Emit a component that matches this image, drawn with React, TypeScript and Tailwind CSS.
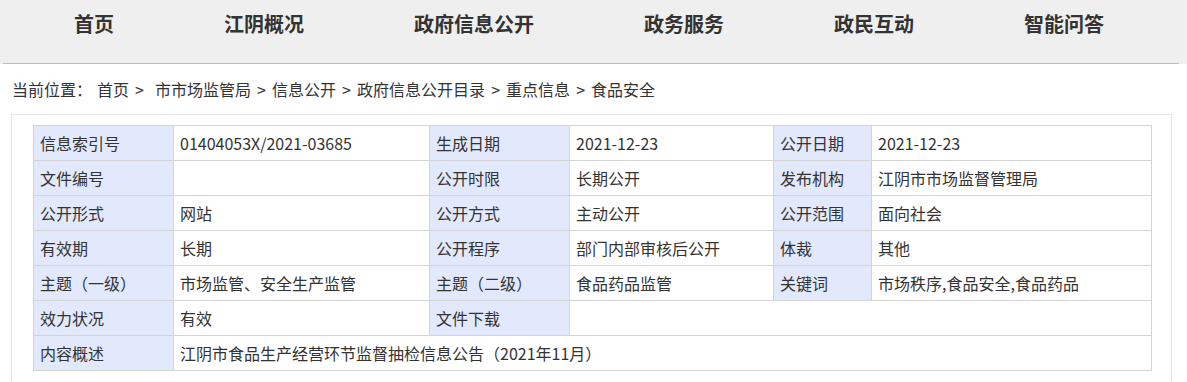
import React from "react";

const font = { fontFamily: '"Microsoft YaHei", "Noto Sans CJK SC", "Noto Sans", sans-serif' };

const navItems = ["首页", "江阴概况", "政府信息公开", "政务服务", "政民互动", "智能问答"];

const crumbs = ["首页", "市市场监管局", "信息公开", "政府信息公开目录", "重点信息", "食品安全"];

type Cell = { text: string; label?: boolean; span?: number };

const rows: Cell[][] = [
  [
    { text: "信息索引号", label: true },
    { text: "01404053X/2021-03685" },
    { text: "生成日期", label: true },
    { text: "2021-12-23" },
    { text: "公开日期", label: true },
    { text: "2021-12-23" },
  ],
  [
    { text: "文件编号", label: true },
    { text: "" },
    { text: "公开时限", label: true },
    { text: "长期公开" },
    { text: "发布机构", label: true },
    { text: "江阴市市场监督管理局" },
  ],
  [
    { text: "公开形式", label: true },
    { text: "网站" },
    { text: "公开方式", label: true },
    { text: "主动公开" },
    { text: "公开范围", label: true },
    { text: "面向社会" },
  ],
  [
    { text: "有效期", label: true },
    { text: "长期" },
    { text: "公开程序", label: true },
    { text: "部门内部审核后公开" },
    { text: "体裁", label: true },
    { text: "其他" },
  ],
  [
    { text: "主题（一级）", label: true },
    { text: "市场监管、安全生产监管" },
    { text: "主题（二级）", label: true },
    { text: "食品药品监管" },
    { text: "关键词", label: true },
    { text: "市场秩序,食品安全,食品药品" },
  ],
  [
    { text: "效力状况", label: true },
    { text: "有效" },
    { text: "文件下载", label: true },
    { text: "", span: 3 },
  ],
  [
    { text: "内容概述", label: true },
    { text: "江阴市食品生产经营环节监督抽检信息公告（2021年11月）", span: 5 },
  ],
];

export default function App() {
  return (
    <div className="w-[1187px] h-[382px] overflow-hidden bg-white text-[#333]" style={font}>
      <div className="bg-[#efefef] h-[64px]">
        <div className="h-[64px] ml-[3px] mr-[8px] border-b border-[#bcbcbc] flex items-start pl-[71px] gap-[110px] pt-[10px]">
          {navItems.map((n) => (
            <div key={n} className="text-[20px] font-bold leading-[28px] text-[#333]">
              {n}
            </div>
          ))}
        </div>
      </div>
      <div className="pl-[12px] pt-[13px] text-[16px] leading-[24px] text-[#333] flex whitespace-nowrap">
        <span className="mr-[5px]">当前位置：</span>
        {crumbs.map((c, i) => (
          <React.Fragment key={c}>
            <span>{c}</span>
            {i < crumbs.length - 1 && (
              <span className={"w-[21px] text-center " + (i === 0 ? "mr-[5px]" : "")}>&gt;</span>
            )}
          </React.Fragment>
        ))}
      </div>
      <div className="ml-[11px] w-[1161px] mt-[13px] border border-[#e6e6e6] pt-[10px] px-[21px] pb-[20px]">
        <table className="border-collapse w-[1118px] table-fixed text-[16px]">
          <colgroup>
            <col className="w-[140px]" />
            <col className="w-[256px]" />
            <col className="w-[140px]" />
            <col className="w-[204px]" />
            <col className="w-[98px]" />
            <col className="w-[280px]" />
          </colgroup>
          <tbody>
            {rows.map((r, i) => (
              <tr key={i} className="h-[35px]">
                {r.map((c, j) => (
                  <td
                    key={j}
                    colSpan={c.span}
                    className={
                      "border border-[#d4d4d4] px-[6px] py-0 leading-[20px] text-[#333] whitespace-nowrap " +
                      (c.label ? "bg-[#e2e9fc]" : "bg-white")
                    }
                  >
                    {c.text}
                  </td>
                ))}
              </tr>
            ))}
          </tbody>
        </table>
      </div>
    </div>
  );
}
